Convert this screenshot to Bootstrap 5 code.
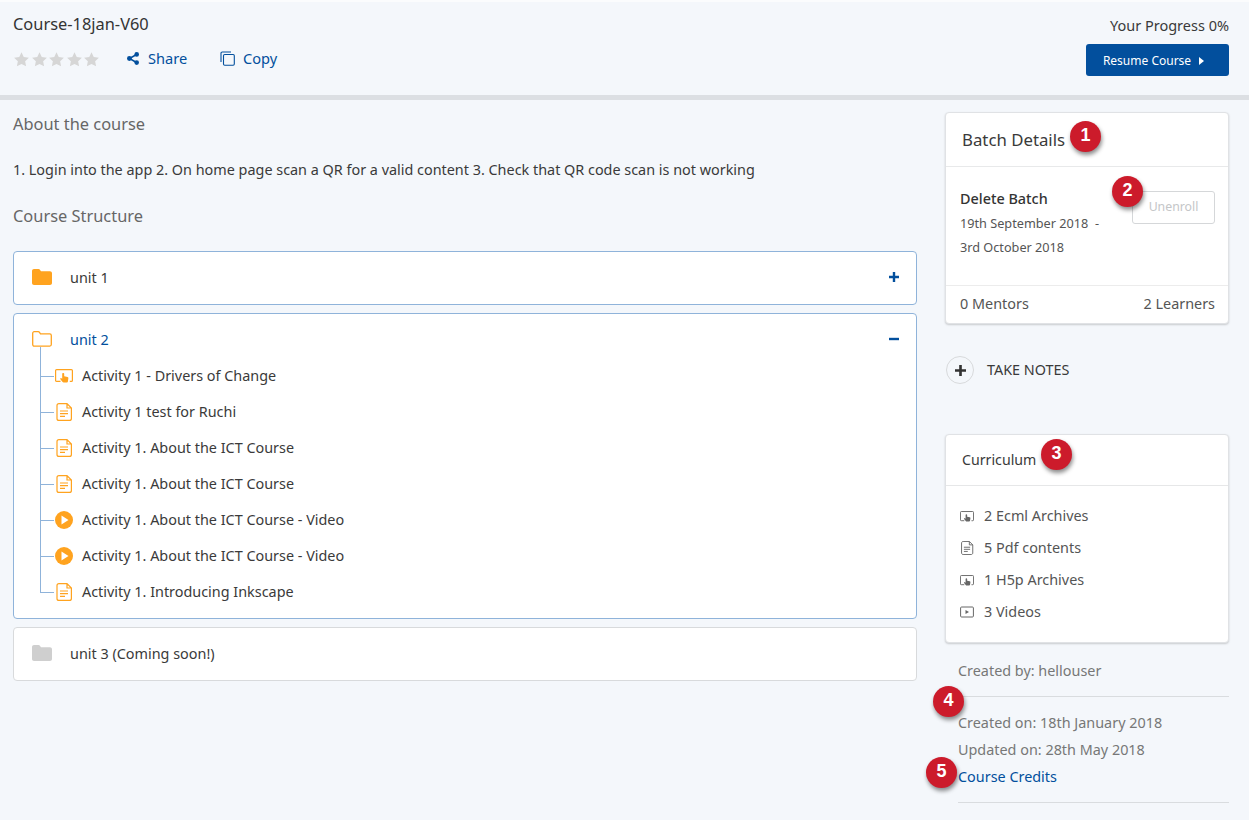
<!DOCTYPE html>
<html lang="en">
<head>
  <meta charset="UTF-8">
  <title>Course-18jan-V60</title>
  <link href="https://cdn.jsdelivr.net/npm/bootstrap@5.3.0/dist/css/bootstrap.min.css" rel="stylesheet">
  <style>
    body {
      background-color: #f4f7fb;
      font-family: "Noto Sans", sans-serif;
      font-size: 14.4px;
      color: #3a3a3a;
      height: 820px;
      overflow: hidden;
      border-top: 2px solid #fbfcfd;
    }
    a { text-decoration: none; color: #024f9d; }

    /* header */
    .course-head {
      height: 98px;
      padding: 11px 20px 0 13px;
      border-bottom: 5px solid #dcdfe3;
    }
    .course-title { font-size: 16.4px; line-height: 22px; color: #333; }
    .rating-row { margin-top: 12px; height: 24px; }
    .star-set { width: 113px; gap: 2.5px; margin-left: 1px; }
    .share-link { font-size: 14.6px; width: 93px; gap: 9px; }
    .share-link + .share-link { gap: 8px; }
    .progress-text { font-size: 14.5px; line-height: 22px; margin-top: 1px; }
    .resume-btn {
      background: #024f9d;
      color: #fff;
      font-size: 12px;
      width: 143px;
      height: 32px;
      border-radius: 3px;
      margin-top: 8px;
      padding: 2px 8px 0 0;
      gap: 8px;
    }

    /* main */
    .page-body { padding: 0 20px 0 13px; gap: 28px; }
    .left-col { width: 904px; }
    .right-col { width: 284px; padding-top: 12px; }
    .sec-title { font-size: 16.4px; line-height: 22px; color: #666; font-weight: 400; margin: 0; }
    .about-title { margin-top: 13px; }
    .about-text { line-height: 22px; margin: 24px 0 24px; }

    /* units */
    .unit-box {
      background: #fff;
      border: 1px solid #8fb3da;
      border-radius: 4px;
      margin-bottom: 8px;
    }
    .unit-head { height: 52px; padding: 0 17px 2px 18px; }
    .unit-name { margin-left: 18px; padding-top: 2px; }
    .unit-box.muted-unit { border-color: #d8dadc; }
    .unit-box.open-unit { height: 306px; }
    .unit-box.open-unit .unit-head { height: 50px; padding-bottom: 0; }
    .activity-list { list-style: none; margin: -6px 0 0; padding: 0; }
    .activity-list li {
      height: 36px;
      padding-left: 41px;
      position: relative;
      gap: 9px;
    }
    .activity-list li::before {
      content: "";
      position: absolute;
      left: 26px;
      top: 0;
      bottom: 0;
      width: 1px;
      background: #8fb3da;
    }
    .activity-list li::after {
      content: "";
      position: absolute;
      left: 26px;
      top: 18px;
      width: 14px;
      height: 1px;
      background: #8fb3da;
    }
    .activity-list li:first-child::before { top: -11px; }
    .activity-list li:last-child::before { bottom: 17px; }

    /* right cards */
    .side-card {
      background: #fff;
      border: 1px solid #e0e2e5;
      border-radius: 4px;
      box-shadow: 0 1px 2px rgba(0,0,0,.18);
    }
    .batch-head { height: 54px; padding-left: 16px; font-size: 16.8px; border-bottom: 1px solid #e8e9ea; }
    .batch-body { height: 118px; padding: 21px 13px 0 14px; }
    .batch-name { line-height: 22px; color: #333; font-weight: 500; }
    .batch-date { font-size: 12.7px; line-height: 24px; color: #555; }
    .batch-date-first { margin-top: 1px; }
    .unenroll-btn {
      width: 83px;
      height: 33px;
      border: 1px solid #d5d7d9;
      border-radius: 3px;
      color: #c4c6c8;
      font-size: 12.3px;
      margin-top: 3px;
    }
    .batch-foot { height: 38px; padding: 0 13px 2px 14px; border-top: 1px solid #ececec; color: #555; }
    .notes-row { margin: 31px 0 49px 1px; height: 30px; gap: 13px; }
    .plus-circle {
      width: 28px;
      height: 28px;
      border: 1px solid #d8dadc;
      border-radius: 50%;
    }
    .curr-head { height: 51px; padding: 0 0 0 16px; font-size: 14.2px; border-bottom: 1px solid #e6e7e8; }
    .curr-body { height: 156px; padding: 14px 0 0 14px; color: #555; }
    .curr-row { height: 32px; gap: 10px; }
    .meta-block { padding-left: 13px; color: #777; }
    .meta-line { line-height: 27px; }
    .meta-first { margin-top: 14px; }
    .meta-rule { height: 1px; background: #d9dcdf; }
    .meta-rule-top { margin: 12px 0; }
    .meta-rule-end { margin-top: 12px; }

    /* number markers */
    .num-marker {
      position: absolute;
      width: 31px;
      height: 31px;
      border-radius: 50%;
      background: #cc1b2b;
      color: #fff;
      font-family: "Liberation Sans", sans-serif;
      font-weight: 700;
      font-size: 18px;
      line-height: 29px;
      text-align: center;
      box-shadow: 1px 3px 4px rgba(0,0,0,.45);
    }
  </style>
</head>
<body class="position-relative">

  <svg width="0" height="0" class="position-absolute">
    <defs>
      <symbol id="ic-star" viewBox="0 0 14 14"><path fill="#d6d6d6" d="M7 .3l2.100 4.400 4.800.6-3.500 3.300.9 4.800L7 11.100l-4.300 2.300.9-4.800L.1 5.300l4.800-.6z"/></symbol>
      <symbol id="ic-folder" viewBox="0 0 20 16"><path fill="currentColor" d="M0 2C0 .9.900 0 2 0h4.500c.7 0 1.200.3 1.600.9L9 2.300h9c1.100 0 2 .9 2 2V14c0 1.100-.9 2-2 2H2c-1.100 0-2-.9-2-2z"/></symbol>
      <symbol id="ic-folder-open" viewBox="0 0 20 16"><path fill="none" stroke="currentColor" stroke-width="1.300" d="M.7 2.200C.7 1.300 1.400.7 2.200.7h4c.6 0 1 .2 1.300.7l1 1.500h9.300c.9 0 1.500.6 1.500 1.500v9.200c0 .9-.6 1.500-1.500 1.500H2.200c-.8 0-1.500-.6-1.500-1.500z"/></symbol>
      <symbol id="ic-doc" viewBox="0 0 16 18"><path fill="none" stroke="currentColor" stroke-width="1.200" d="M3 .6h8L15.400 5v10.400c0 1.100-.9 2-2 2H3c-1.100 0-2-.9-2-2V2.600c0-1.100.9-2 2-2zM11 .6V5h4.400"/><path fill="none" stroke="currentColor" stroke-width="1.200" d="M4 8h8M4 10.700h8M4 13.400h5"/></symbol>
      <symbol id="ic-slide" viewBox="0 0 18 14"><path fill="none" stroke="currentColor" stroke-width="1.200" d="M5.500 12.400H1.600c-.6 0-1-.4-1-1V1.600c0-.6.4-1 1-1h14.800c.6 0 1 .4 1 1v9.800c0 .6-.4 1-1 1h-1.600"/><path fill="currentColor" d="M8.200 4c.6 0 1 .4 1 1v2.200l3.300.7c.6.1 1 .6.900 1.200l-.5 3.300c-.1.600-.6 1.100-1.200 1.100H8.600c-.4 0-.8-.2-1-.5L5 9.800l1-.9 1.200.9V5c0-.6.400-1 1-1z"/></symbol>
      <symbol id="ic-play" viewBox="0 0 18 18"><circle cx="9" cy="9" r="9" fill="currentColor"/><path fill="#fff" d="M6.500 4.500l7 4.500-7 4.500z"/></symbol>
      <symbol id="ic-video" viewBox="0 0 14 12"><rect x=".6" y="1" width="12.800" height="10" rx="1" fill="none" stroke="currentColor" stroke-width="1"/><path fill="currentColor" d="M5.500 4l3.500 2-3.500 2z"/></symbol>
    </defs>
  </svg>

  <header class="course-head d-flex justify-content-between">
    <div>
      <div class="course-title">Course-18jan-V60</div>
      <div class="rating-row d-flex align-items-center">
        <div class="star-set d-flex">
          <svg width="15" height="15"><use href="#ic-star"/></svg>
          <svg width="15" height="15"><use href="#ic-star"/></svg>
          <svg width="15" height="15"><use href="#ic-star"/></svg>
          <svg width="15" height="15"><use href="#ic-star"/></svg>
          <svg width="15" height="15"><use href="#ic-star"/></svg>
        </div>
        <a href="#" class="share-link d-flex align-items-center">
          <svg width="12" height="13" viewBox="0 0 12 13"><path fill="none" stroke="#024f9d" stroke-width="1.500" d="M9.500 2.500L2.500 6.500l7 4"/><circle cx="9.700" cy="2.400" r="2.300" fill="#024f9d"/><circle cx="2.400" cy="6.500" r="2.400" fill="#024f9d"/><circle cx="9.700" cy="10.600" r="2.300" fill="#024f9d"/></svg>
          Share
        </a>
        <a href="#" class="share-link d-flex align-items-center">
          <svg width="15" height="15" viewBox="0 0 15 15" fill="none" stroke="#024f9d" stroke-width="1.100"><path d="M1 11V2.200C1 1.500 1.500 1 2.200 1H11"/><rect x="3.500" y="3.500" width="10.800" height="10.800" rx="1.200"/></svg>
          Copy
        </a>
      </div>
    </div>
    <div class="d-flex flex-column align-items-end">
      <div class="progress-text">Your Progress 0%</div>
      <a href="#" class="resume-btn d-flex align-items-center justify-content-center">
        Resume Course
        <svg width="5" height="8" viewBox="0 0 5 8"><path fill="#fff" d="M0 0l5 4-5 4z"/></svg>
      </a>
    </div>
  </header>

  <div class="page-body d-flex">
    <main class="left-col">
      <h2 class="sec-title about-title">About the course</h2>
      <p class="about-text">1. Login into the app 2. On home page scan a QR for a valid content 3. Check that QR code scan is not working</p>
      <h2 class="sec-title mb-4">Course Structure</h2>

      <div class="unit-box">
        <div class="unit-head d-flex align-items-center">
          <svg width="20" height="16" style="color:#ffa31f"><use href="#ic-folder"/></svg>
          <span class="unit-name flex-grow-1">unit 1</span>
          <svg width="10" height="10" viewBox="0 0 10 10"><path fill="#024f9d" d="M3.800 0h2.400v3.800H10v2.400H6.200V10H3.800V6.200H0V3.800h3.800z"/></svg>
        </div>
      </div>

      <div class="unit-box open-unit">
        <div class="unit-head d-flex align-items-center">
          <svg width="20" height="16" style="color:#ffa31f"><use href="#ic-folder-open"/></svg>
          <a href="#" class="unit-name flex-grow-1">unit 2</a>
          <svg width="10" height="10" viewBox="0 0 10 10"><path fill="#024f9d" d="M0 3.800h10v2.400H0z"/></svg>
        </div>
        <ul class="activity-list">
          <li class="d-flex align-items-center"><svg width="18" height="14" style="color:#ffa31f"><use href="#ic-slide"/></svg><span>Activity 1 - Drivers of Change</span></li>
          <li class="d-flex align-items-center"><svg width="18" height="18" style="color:#ffa31f"><use href="#ic-doc"/></svg><span>Activity 1 test for Ruchi</span></li>
          <li class="d-flex align-items-center"><svg width="18" height="18" style="color:#ffa31f"><use href="#ic-doc"/></svg><span>Activity 1. About the ICT Course</span></li>
          <li class="d-flex align-items-center"><svg width="18" height="18" style="color:#ffa31f"><use href="#ic-doc"/></svg><span>Activity 1. About the ICT Course</span></li>
          <li class="d-flex align-items-center"><svg width="18" height="18" style="color:#ffa31f"><use href="#ic-play"/></svg><span>Activity 1. About the ICT Course - Video</span></li>
          <li class="d-flex align-items-center"><svg width="18" height="18" style="color:#ffa31f"><use href="#ic-play"/></svg><span>Activity 1. About the ICT Course - Video</span></li>
          <li class="d-flex align-items-center"><svg width="18" height="18" style="color:#ffa31f"><use href="#ic-doc"/></svg><span>Activity 1. Introducing Inkscape</span></li>
        </ul>
      </div>

      <div class="unit-box muted-unit">
        <div class="unit-head d-flex align-items-center">
          <svg width="20" height="16" style="color:#cfcfcf"><use href="#ic-folder"/></svg>
          <span class="unit-name flex-grow-1">unit 3 (Coming soon!)</span>
        </div>
      </div>
    </main>

    <aside class="right-col">
      <div class="side-card">
        <div class="batch-head d-flex align-items-center">Batch Details</div>
        <div class="batch-body d-flex justify-content-between">
          <div>
            <div class="batch-name">Delete Batch</div>
            <div class="batch-date batch-date-first">19th September 2018 &nbsp;-</div>
            <div class="batch-date">3rd October 2018</div>
          </div>
          <div class="unenroll-btn d-flex align-items-center justify-content-center">Unenroll</div>
        </div>
        <div class="batch-foot d-flex align-items-center justify-content-between">
          <span>0 Mentors</span><span>2 Learners</span>
        </div>
      </div>

      <div class="notes-row d-flex align-items-center">
        <span class="plus-circle d-flex align-items-center justify-content-center">
          <svg width="11" height="11" viewBox="0 0 10 10"><path fill="#333" d="M3.800 0h2.400v3.800H10v2.400H6.200V10H3.800V6.200H0V3.800h3.800z"/></svg>
        </span>
        TAKE NOTES
      </div>

      <div class="side-card">
        <div class="curr-head d-flex align-items-center">Curriculum</div>
        <div class="curr-body">
          <div class="curr-row d-flex align-items-center"><svg width="14" height="11" style="color:#666"><use href="#ic-slide"/></svg>2 Ecml Archives</div>
          <div class="curr-row d-flex align-items-center"><svg width="14" height="14" style="color:#666"><use href="#ic-doc"/></svg>5 Pdf contents</div>
          <div class="curr-row d-flex align-items-center"><svg width="14" height="11" style="color:#666"><use href="#ic-slide"/></svg>1 H5p Archives</div>
          <div class="curr-row d-flex align-items-center"><svg width="14" height="12" style="color:#666"><use href="#ic-video"/></svg>3 Videos</div>
        </div>
      </div>

      <div class="meta-block">
        <div class="meta-line meta-first">Created by: hellouser</div>
        <div class="meta-rule meta-rule-top"></div>
        <div class="meta-line">Created on: 18th January 2018</div>
        <div class="meta-line">Updated on: 28th May 2018</div>
        <div class="meta-line"><a href="#">Course Credits</a></div>
        <div class="meta-rule meta-rule-end"></div>
      </div>
    </aside>
  </div>

  <div class="num-marker" style="left:1070px;top:119px">1</div>
  <div class="num-marker" style="left:1112px;top:174px">2</div>
  <div class="num-marker" style="left:1041px;top:437px">3</div>
  <div class="num-marker" style="left:933px;top:684px">4</div>
  <div class="num-marker" style="left:926px;top:755px">5</div>

</body>
</html>
